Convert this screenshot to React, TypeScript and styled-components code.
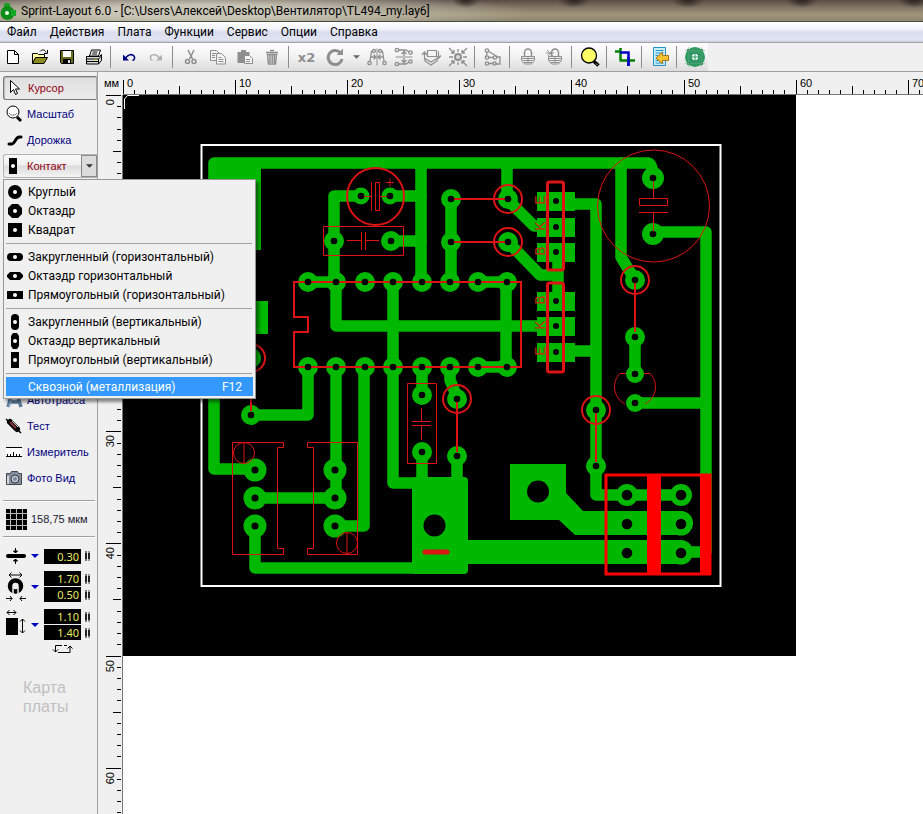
import React, { useEffect, useState } from "react";
import styled, { createGlobalStyle, css } from "styled-components";

const uiFont = `Roboto, "Noto Sans", sans-serif`;
const plainFont = `"Liberation Sans", Arial, sans-serif`;

const GlobalStyle = createGlobalStyle`
  * { box-sizing: border-box; }
  html, body, #root { height: 100%; }
  body { margin: 0; overflow: hidden; background: #fff; }
  button, input { font: inherit; color: inherit; margin: 0; padding: 0; border: 0; background: none; border-radius: 0; }
  svg { display: block; flex: none; }
`;

const Window = styled.div`
  display: flex;
  flex-direction: column;
  height: 100vh;
  font-family: ${uiFont};
  font-size: 12px;
  color: #000;
`;

const TitleBar = styled.header`
  display: flex;
  align-items: center;
  gap: 4px;
  height: 22px;
  flex: none;
  border-bottom: 1px solid #4a4640;
  background:
    radial-gradient(ellipse 14px 8px at 466px 0, #2b231e, transparent),
    radial-gradient(ellipse 16px 8px at 574px 0, #2b231e, transparent),
    radial-gradient(ellipse 16px 8px at 688px 0, #2b231e, transparent),
    radial-gradient(ellipse 16px 8px at 802px 0, #2b231e, transparent),
    radial-gradient(ellipse 16px 8px at 914px 0, #2b231e, transparent),
    radial-gradient(ellipse 330px 22px at 200px 12px, #c8c5b6 30%, transparent),
    linear-gradient(#5a4c46, #867b68 40%, #a09679 70%, #8d8573);
`;

const Title = styled.h1`
  margin: 0;
  font-size: 12px;
  font-weight: 400;
  line-height: 20px;
  white-space: nowrap;
`;

const MenuBar = styled.nav`
  display: flex;
  align-items: center;
  gap: 13px;
  height: 21px;
  flex: none;
  padding: 0 7px;
  border-bottom: 1px solid #a5a5a9;
  background: linear-gradient(#fff, #f1f3fb 35%, #dadeee 50%, #dfe3f2 90%, #c6c9d6);
`;

const MenuBarItem = styled.button`
  line-height: 18px;
  white-space: nowrap;
`;

const ToolbarStrip = styled.div`
  display: flex;
  height: 29px;
  flex: none;
  background: #f0f0f0;
  border-bottom: 1px solid #a0a0a0;
`;

const Toolbar = styled.div`
  display: flex;
  align-items: center;
  background: linear-gradient(#fdfdfd, #f2f2f2 50%, #dcdcdc);
`;

const ToolButton = styled.button<{ $w?: number }>`
  display: flex;
  align-items: center;
  justify-content: center;
  width: ${(p) => p.$w ?? 27}px;
  height: 28px;
`;

const ToolSeparator = styled.span`
  width: 1px;
  height: 22px;
  margin: 0 4px 0 3px;
  background: #8c8c8c;
`;

const Workspace = styled.main`
  display: flex;
  flex: 1;
  min-height: 0;
`;

const Sidebar = styled.aside`
  display: flex;
  flex-direction: column;
  flex: none;
  width: 98px;
  padding: 4px 0 0 3px;
  border-right: 1px solid #a0a0a0;
  background: #f0f0f0;
  font-family: ${plainFont};
  font-size: 11px;
`;

const ToolRow = styled.button<{ $active?: boolean; $state?: "pressed" }>`
  display: flex;
  align-items: center;
  gap: 4px;
  width: 100%;
  height: 26px;
  flex: none;
  text-align: left;
  white-space: nowrap;
  color: ${(p) => (p.$active ? "#900010" : "#000080")};
  ${(p) =>
    p.$state === "pressed" &&
    css`
      height: 24px;
      margin: 0 0 1px;
      border: 1px solid #777;
      border-right-color: #aaa;
      border-radius: 3px 0 0 3px;
      background: linear-gradient(#dedede, #ececec);
      box-shadow: inset 1px 1px 1px #bbb;
    `}
`;

const SplitTool = styled.div`
  position: relative;
  display: flex;
  flex: none;
  height: 24px;
  margin: 1px 0 209px;
  border: 1px solid #b4b4b4;
  border-right: 0;
  border-radius: 3px 0 0 3px;
  background: linear-gradient(#fafafa, #f0f0f0 45%, #dcdcdc 50%, #f4f4f4);
`;

const SplitMain = styled.button`
  display: flex;
  align-items: center;
  gap: 4px;
  flex: 1;
  color: #900010;
`;

const SplitArrow = styled.button`
  display: flex;
  align-items: center;
  justify-content: center;
  width: 16px;
  border: 1px solid #8a8a8a;
  background: #dcdcdc;
`;

const Popup = styled.div`
  position: absolute;
  z-index: 2;
  top: 24px;
  left: -1px;
  width: 253px;
  padding: 2px;
  border: 1px solid #979797;
  background: #f0f0f0;
  box-shadow: 3px 3px 3px rgba(0, 0, 0, 0.45);
  font-family: ${uiFont};
  font-size: 12px;
  color: #000;
`;

const PopupItem = styled.button<{ $hot?: boolean }>`
  display: flex;
  align-items: center;
  gap: 3px;
  width: 100%;
  height: 19px;
  line-height: 19px;
  padding: 1px 11px 0 0;
  white-space: nowrap;
  background: ${(p) => (p.$hot ? "#3399ff" : "transparent")};
  color: ${(p) => (p.$hot ? "#fff" : "#000")};
`;

const Shortcut = styled.span`
  margin-left: auto;
`;

const PopupRule = styled.hr`
  height: 1px;
  margin: 4px 1px 3px 0;
  border: 0;
  background: #a0a0a0;
`;

const SideRule = styled.hr<{ $top?: number }>`
  width: 92px;
  height: 2px;
  flex: none;
  margin: ${(p) => p.$top ?? 0}px 0 0;
  border: 0;
  border-top: 1px solid #a0a0a0;
  background: #fff;
`;

const GridButton = styled.button`
  display: flex;
  align-items: center;
  gap: 4px;
  height: 34px;
  flex: none;
  padding-left: 3px;
  white-space: nowrap;
  color: #202030;
`;

const Params = styled.div`
  display: flex;
  flex-direction: column;
  gap: 7px;
  padding-top: 10px;
`;

const ParamGroup = styled.div`
  display: flex;
  align-items: center;
  padding-left: 3px;
`;

const ParamIcon = styled.div`
  width: 25px;
`;

const ParamDrop = styled.button`
  display: flex;
  width: 13px;
  justify-content: flex-start;
`;

const ParamFields = styled.div`
  display: flex;
  flex-direction: column;
  gap: 1px;
`;

const ParamField = styled.label`
  display: flex;
  align-items: center;
  gap: 3px;
`;

const ParamInput = styled.input`
  width: 37px;
  height: 15px;
  padding-right: 2px;
  background: #000;
  color: #e8e860;
  font-family: "Noto Sans", sans-serif;
  font-size: 11px;
  line-height: 15px;
  text-align: right;
`;

const SwapButton = styled.button`
  align-self: flex-start;
  margin: 4px 0 0 49px;
`;

const BoardMap = styled.p`
  margin: 24px 0 0 20px;
  font-size: 16px;
  line-height: 19px;
  color: #c0c0c0;
`;

const Sheet = styled.section`
  display: grid;
  grid-template-columns: 25px 1fr;
  grid-template-rows: 23px 1fr;
  flex: 1;
  min-width: 0;
  min-height: 0;
  background: #f0f0f0;
`;

const Unit = styled.span`
  padding-left: 6px;
  font-family: ${plainFont};
  font-size: 11px;
  line-height: 23px;
`;

const RulerTop = styled.div`
  overflow: hidden;
  border-bottom: 1px solid #777;
`;

const RulerLeft = styled.div`
  overflow: hidden;
  border-right: 1px solid #777;
`;

const Canvas = styled.div`
  overflow: hidden;
  background: #fff;
`;

/* ---------- toolbar icons ---------- */

type Draw = { children: React.ReactNode; s?: number };
const Ic = ({ children, s = 20 }: Draw) => (
  <svg width={s} height={s} viewBox={`0 0 ${s} ${s}`} fill="none" aria-hidden="true">
    {children}
  </svg>
);
const G = "#8e8e8e";

const icons: Record<string, React.ReactNode> = {
  new: <path d="M4.500 3.500h7l4 4v9h-11z M11.500 3.500v4h4" fill="#fff" stroke="#000" />,
  open: (
    <>
      <path d="M2.500 16.500V6.500h5l1 1h6v3" fill="#ffff9c" stroke="#000" />
      <path d="M2.500 16.500l3-6h12l-3.500 6z" fill="#8c8c1c" stroke="#000" />
      <path d="M10 4.500c2-2.500 5-2 6 1M17.500 3v3.500H14" stroke="#000" />
    </>
  ),
  save: (
    <>
      <path d="M3.500 3.500h13v13h-12l-1-1z" fill="#6c6c20" stroke="#000" />
      <path d="M6 4h8v6H6z" fill="#fff" />
      <path d="M6 12h8v4.500H6z" fill="#000" />
      <path d="M11 13h2v3h-2z" fill="#ddd" />
    </>
  ),
  print: (
    <>
      <path d="M5.500 9l2-6h9l-2 6z" fill="#fff" stroke="#000" />
      <path d="M8.500 5h5M8 7h5" stroke="#000" />
      <path d="M2.500 9.500h13l2-2v6l-3 3.500h-12z" fill="#ddd" stroke="#000" />
      <path d="M2.500 12h12M3 14.500h11M14.500 17v-5l3-3" stroke="#000" />
      <path d="M10 13h3" stroke="#d8d020" />
    </>
  ),
  undo: (
    <>
      <path d="M6 11.500c3-4 7-5 9-2.500 1.500 2 0 4-1.500 4.500" stroke="#000080" strokeWidth="1.500" />
      <path d="M4 7.500v6h6z" fill="#000080" />
    </>
  ),
  redo: (
    <>
      <path d="M14 11.500c-3-4-7-5-9-2.500-1.500 2 0 4 1.500 4.500" stroke="#a8a8a8" strokeWidth="1.300" />
      <path d="M16 7.500v6h-6z" fill="#b0b0b0" />
    </>
  ),
  cut: (
    <g stroke={G} strokeWidth="1.500">
      <path d="M7 3l4.500 9M13 3L8.500 12" />
      <circle cx="6.500" cy="14.500" r="2" />
      <circle cx="13" cy="14.500" r="2" />
    </g>
  ),
  copy: (
    <g stroke={G} fill="#f4f4f4">
      <path d="M2.500 3.500h6l3 3v7h-9z" />
      <path d="M8.500 6.500h5l4 4v6.500h-9z" />
      <path d="M4 6.500h4M4 8.500h3M4 10.500h3M10.500 10.500h3M10.500 12.500h5M10.500 14.500h5" />
    </g>
  ),
  paste: (
    <>
      <path d="M2.500 5h12v11h-12zM6 3h5v3H6z" fill={G} />
      <path d="M9.500 8.500h5l3 3v5h-8z" fill="#f4f4f4" stroke={G} />
      <path d="M11 12.500h4M11 14.500h4" stroke={G} />
    </>
  ),
  trash: (
    <g stroke={G} strokeWidth="1.500">
      <path d="M4 5.500h12M8 3.500h4M5.500 7.500l1 9.500h7l1-9.500zM8 8v8M10.200 8v8M12.300 8v8" />
    </g>
  ),
  rotate: (
    <>
      <path d="M15.500 6A7 7 0 1 0 17 12" stroke={G} strokeWidth="3" />
      <path d="M11.500 8H18V1.500z" fill={G} />
    </>
  ),
  mirrorH: (
    <g stroke={G} strokeWidth="1.300">
      <path d="M10 1.500v17" strokeWidth="1" />
      <path d="M6 4.500H4.500L3 14M14 4.500h1.500L17 14M4 10h4.500M16 10h-4.500M6.500 7.500L9 10l-2.500 2.500M13.500 7.500L11 10l2.500 2.500" />
      <circle cx="7" cy="4" r="1.500" /><circle cx="13" cy="4" r="1.500" />
      <circle cx="2.500" cy="16" r="1.700" /><circle cx="17.500" cy="16" r="1.700" />
    </g>
  ),
  mirrorV: (
    <g stroke={G} strokeWidth="1.300">
      <path d="M1.500 10h17" strokeWidth="1" />
      <path d="M4 3h8l3 2M4 17h8l3-2M10 4.500V9M10 11v4.500M7.500 7L10 4.500 12.500 7M7.500 13l2.500 2.500 2.500-2.500" />
      <circle cx="3" cy="3" r="1.700" /><circle cx="16.500" cy="5.500" r="1.700" />
      <circle cx="3" cy="17" r="1.700" /><circle cx="16.500" cy="14.500" r="1.700" />
    </g>
  ),
  flip: (
    <g stroke={G} strokeWidth="1.200">
      <path d="M6.500 3.500h9v6h-9zM3.500 12V5.500M1 8l2.500-3L6 8M17.500 4.500V11M15 8.500l2.500 3L20 8.500M4 11.500l6 3.500 6-3.500M4 11.500V14l6 4 6-4v-2.500" />
    </g>
  ),
  snap: (
    <g stroke={G} strokeWidth="1.300">
      <circle cx="10" cy="10" r="3" fill="#ddd" strokeWidth="2" />
      <path d="M1 1l5 5M6 3v3H3M19 1l-5 5M14 3v3h3M1 19l5-5M3 14h3v3M19 19l-5-5M17 14h-3v3M10 2v3M10 15v3M1 10h4M15 10h4" />
    </g>
  ),
  connect: (
    <g stroke={G} strokeWidth="1.300">
      <path d="M5 4l10 6h2v7h-5M5.500 10.500h5M5.500 16.500h5M4 5.500l-.500 4" />
      <circle cx="4" cy="3.500" r="1.700" /><circle cx="4" cy="10.500" r="1.700" />
      <circle cx="12" cy="10.500" r="1.700" /><circle cx="4" cy="16.500" r="1.700" />
      <circle cx="11.500" cy="16.500" r="1.700" />
    </g>
  ),
  lock: (
    <g stroke={G}>
      <path d="M6.500 9V5.500a3.500 3.500 0 0 1 7 0V9" strokeWidth="1.500" />
      <path d="M3.500 9.500h13v4l-3 3.500h-7l-3-3.500z" fill="#eee" />
      <path d="M4 11.500h12M4.500 13.500h11M6 15.500h8M10 10v6" />
    </g>
  ),
  lock2: (
    <g stroke={G}>
      <path d="M6.500 9V5.500a3.500 3.500 0 0 1 7 0V9" strokeWidth="1.500" />
      <path d="M3.500 9.500h13v4l-3 3.500h-7l-3-3.500z" fill="#eee" />
      <path d="M4 11.500h12M4.500 13.500h11M6 15.500h8M10 10v6M2 3l6 6M8 3L3 9M1 6h8" />
    </g>
  ),
  zoom: (
    <>
      <path d="M14 14.500l4.500 4" stroke="#000" strokeWidth="3.500" />
      <circle cx="9" cy="8.500" r="7.500" fill="#ffff66" stroke="#000" strokeWidth="1.300" />
      <path d="M16 16.500l1.500 1.500" stroke="#aaa" />
    </>
  ),
  crop: (
    <>
      <path d="M0 4.500h5M5.500 1v12" stroke="#008000" strokeWidth="2.500" />
      <path d="M5 5.500h8.500V19" stroke="#0000c8" strokeWidth="2.500" />
      <path d="M4.500 13.500H20" stroke="#008000" strokeWidth="2.500" />
      <path d="M13.500 10v9" stroke="#0000c8" strokeWidth="2.500" />
    </>
  ),
  import: (
    <>
      <path d="M3.500 0.500h12v18h-12z" fill="#c8f0ff" stroke="#2890c8" />
      <path d="M5.500 3.500h8M5.500 6h8M5.500 8.500h3M5.500 11h2M5.500 13.500h4M5.500 16h8" stroke="#2890c8" />
      <path d="M6 11l6.500-6v3.500h6v5h-6V17z" fill="#f8c030" stroke="#a07818" />
    </>
  ),
  chip: (
    <>
      <circle cx="10" cy="10" r="10" fill="#2f9a62" />
      <path d="M2 2h4v4H2zM14 2h4v4h-4zM2 14h4v4H2zM14 14h4v4h-4z" fill="#2f9a62" />
      <path d="M3.500 0v20M16.500 0v20M0 3.500h20M0 16.500h20" stroke="#6f9f84" strokeWidth="0.500" />
      <path d="M8 7h4v1h1v4h-1v1H8v-1H7V8h1z" fill="#fff" />
      <path d="M10 7v6M7 10h6" stroke="#2f9a62" />
    </>
  ),
};

const ToolX2 = styled.span`
  font-family: "DejaVu Sans", sans-serif;
  font-size: 13px;
  font-weight: 700;
  color: #8e8e8e;
`;

const tools: [string, string][][] = [
  [["new", "Новый"], ["open", "Открыть"], ["save", "Сохранить"], ["print", "Печать"]],
  [["undo", "Отменить"], ["redo", "Повторить"]],
  [["cut", "Вырезать"], ["copy", "Копировать"], ["paste", "Вставить"], ["trash", "Удалить"]],
  [["x2", "Дублировать"], ["rotate", "Повернуть"], ["caret", "Угол"], ["mirrorH", "Отразить по горизонтали"], ["mirrorV", "Отразить по вертикали"], ["flip", "На другую сторону"], ["snap", "Привязать к сетке"]],
  [["connect", "Соединения"]],
  [["lock", "Группировать"], ["lock2", "Разгруппировать"]],
  [["zoom", "Масштаб"]],
  [["crop", "Обрезка"]],
  [["import", "Шаблон"]],
  [["chip", "Металлизация"]],
];

const Caret = ({ color = "#333", w = 7 }: { color?: string; w?: number }) => (
  <svg width={w} height="4" viewBox="0 0 8 4" aria-hidden="true">
    <path d="M0 0h8L4 4z" fill={color} />
  </svg>
);

const toolContent = (id: string) => {
  if (id === "x2") return <ToolX2>x2</ToolX2>;
  if (id === "caret") return <Caret color="#666" />;
  return <Ic>{icons[id]}</Ic>;
};
const widths: Record<string, number> = { new: 26, caret: 13, rotate: 30 };
const toolWidth = (id: string) => widths[id] ?? 27;

/* ---------- side icons ---------- */

const side = {
  cursor: <path d="M6.500 2.500v12l3-3 2 5 2-1-2-4.500h4z" fill="#fff" stroke="#000" />,
  magnify: (
    <>
      <circle cx="10" cy="8" r="6" fill="#fff" stroke="#000" />
      <path d="M6 9c2 3 6 3 8 0" stroke="#777" />
      <path d="M14 13l4 4" stroke="#000" strokeWidth="3" />
    </>
  ),
  track: <path d="M6 14h2.500c4 0 3.500-7 8-7H18" stroke="#000" strokeWidth="3" strokeLinecap="round" />,
  auto: (
    <>
      <path d="M5 17L9 4h5l4 13M7 12h9" stroke="#5c7c9c" strokeWidth="3.500" />
      <path d="M6 17L10 4" stroke="#a8c4dc" />
    </>
  ),
  test: (
    <>
      <path d="M3 3l15 14" stroke="#000" strokeWidth="1.500" />
      <path d="M7 6l7 7" stroke="#000" strokeWidth="6" strokeLinecap="round" />
      <path d="M7 6l6 6" stroke="#8a3030" strokeWidth="2" />
      <path d="M9 5l6 6" stroke="#ccc" />
    </>
  ),
  measure: (
    <>
      <path d="M3 5h16v9H3z" fill="#fff" />
      <path d="M3 5.500h16M3 14.500h16M4.500 12v2M7.500 12v2M10.500 10v4M13.500 12v2M16.500 12v2" stroke="#000" />
    </>
  ),
  photo: (
    <>
      <path d="M3.500 5.500h4l1-2h6l1 2h3v11h-15z" fill="#8890a0" stroke="#404850" />
      <path d="M4 8h2v8H4z" fill="#d8d8dc" />
      <circle cx="12" cy="11" r="4" fill="#c8ccd4" stroke="#303840" />
      <circle cx="12" cy="11" r="2" fill="#7888a0" />
    </>
  ),
};

const padIcon = (kind: string) => {
  const shapes: Record<string, React.ReactNode> = {
    round: <circle cx="12" cy="9" r="7" />,
    octa: <path d="M9 2h6l4 4v6l-4 4H9l-4-4V6z" />,
    square: <path d="M5 2h14v14H5z" />,
    roundH: <rect x="4" y="5" width="16" height="8" rx="4" />,
    octaH: <path d="M7 5h10l3 3v2l-3 3H7l-3-3V8z" />,
    rectH: <path d="M4 5h16v8H4z" />,
    roundV: <rect x="8" y="1" width="8" height="16" rx="4" />,
    octaV: <path d="M10 1h4l2 3v10l-2 3h-4l-2-3V4z" />,
    rectV: <path d="M8 1h8v16H8z" />,
    none: null,
  };
  return (
    <svg width="19" height="18" viewBox="3 0 19 18" aria-hidden="true">
      {shapes[kind]}
      {kind !== "none" && <circle cx="12" cy="9" r="2" fill="#fff" />}
    </svg>
  );
};

const popupGroups: [string, string][][] = [
  [["round", "Круглый"], ["octa", "Октаэдр"], ["square", "Квадрат"]],
  [["roundH", "Закругленный (горизонтальный)"], ["octaH", "Октаэдр горизонтальный"], ["rectH", "Прямоугольный (горизонтальный)"]],
  [["roundV", "Закругленный (вертикальный)"], ["octaV", "Октаэдр вертикальный"], ["rectV", "Прямоугольный (вертикальный)"]],
];

const Spin = () => (
  <svg width="8" height="12" viewBox="0 0 8 12" aria-hidden="true">
    <rect x="1" y="1" width="2" height="10" fill="#777" />
    <rect x="4" y="1" width="2" height="10" fill="#999" />
    <path d="M1 3h2v6H1zM4 3h2v6H4z" fill="#222" />
  </svg>
);

const paramGroups = [
  {
    name: "Ширина дорожки",
    values: ["0.30"],
    icon: (
      <svg width="20" height="16" viewBox="0 0 20 16" stroke="#000" aria-hidden="true">
        <path d="M2 8h16" strokeWidth="4" strokeLinecap="round" />
        <path d="M9.500 0v5M9.500 11v5" />
        <path d="M7.500 3h4l-2 2zM7.500 13h4l-2-2z" />
      </svg>
    ),
  },
  {
    name: "Контакт",
    values: ["1.70", "0.50"],
    icon: (
      <svg width="22" height="31" viewBox="0 0 22 31" fill="none" stroke="#000" aria-hidden="true">
        <path d="M3 4h13M5.500 1.500L3 4l2.500 2.500M13.500 1.500L16 4l-2.500 2.500" />
        <circle cx="9.500" cy="15" r="5.500" strokeWidth="4.500" />
        <path d="M7 16v8M12 16v8" stroke="#f0f0f0" strokeWidth="1.500" />
        <path d="M0 27.500h6M4 25l2 2.500L4 30M20 27.500h-6M16 25l-2 2.500 2 2.500" />
      </svg>
    ),
  },
  {
    name: "Планар",
    values: ["1.10", "1.40"],
    icon: (
      <svg width="22" height="31" viewBox="0 0 22 31" fill="none" stroke="#000" aria-hidden="true">
        <path d="M1 3.500h9M3.500 1L1 3.500 3.500 6M7.500 1L10 3.500 7.500 6M16.500 10v14M14 12.500l2.500-2.500 2.500 2.500M14 21.500l2.500 2.500 2.500-2.500" />
        <path d="M0 9h12v17H0z" fill="#000" stroke="none" />
      </svg>
    ),
  },
];

/* ---------- rulers ---------- */

const STEP = 11.21;
const tickLen = (i: number) => (i % 10 === 0 ? 14 : i % 5 === 0 ? 8 : 4);
const range = (length: number) => Array.from({ length: Math.max(1, Math.ceil(length)) }, (_, i) => i);

const useWindowSize = () => {
  const read = () => ({ w: window.innerWidth, h: window.innerHeight });
  const [size, setSize] = useState(read);
  useEffect(() => {
    const update = () => setSize(read());
    window.addEventListener("resize", update);
    return () => window.removeEventListener("resize", update);
  }, []);
  return size;
};

const HorizontalRuler = ({ length }: { length: number }) => (
  <svg width="100%" height="22" fontFamily="Liberation Sans" fontSize="11" aria-hidden="true">
    {range(length / STEP).map((i) => (
      <path key={i} d={`M${Math.round(i * STEP) + 0.5} 22v-${tickLen(i)}`} stroke="#000" />
    ))}
    {range(length / STEP / 10).map((i) => (
      <text key={i} x={Math.round(i * 10 * STEP) + 4} y="15">{i * 10}</text>
    ))}
  </svg>
);

const VerticalRuler = ({ length }: { length: number }) => (
  <svg width="24" height="100%" fontFamily="Liberation Sans" fontSize="11" aria-hidden="true">
    {range(length / STEP).map((i) => (
      <path key={i} d={`M23 ${Math.round(i * STEP) + 0.5}h-${i % 10 === 0 ? 15 : tickLen(i)}`} stroke="#000" />
    ))}
    {range(length / STEP / 10).map((i) => (
      <text key={i} textAnchor="end" transform={`translate(16 ${Math.round(i * 10 * STEP) + 4}) rotate(-90)`}>
        {i * 10}
      </text>
    ))}
  </svg>
);

/* ---------- circuit board ---------- */

type Pad = [number, number, number, number];
const icX = [308, 336, 365, 393, 422, 450, 478, 507];
const pads: Pad[] = [
  ...icX.map((x): Pad => [x, 282, 10, 3.3]),
  ...icX.map((x): Pad => [x, 367, 10, 3.3]),
  [361, 196, 8.5, 3.3], [390, 196, 8.5, 3.3], [334, 241, 10, 3.3], [391, 241, 10, 3.3],
  [451, 199, 10, 3.3], [451, 242, 10, 3.3], [508, 199, 10, 3.3], [508, 242, 10, 3.3],
  [653, 178, 11, 3.3], [653, 234, 11, 3.3], [635, 280, 10, 3.3], [635, 337, 10, 3.3],
  [635, 374, 9, 3.3], [635, 403, 9, 3.3], [596, 410, 10, 3.3], [596, 466, 10, 3.3],
  [251, 358, 10, 3.3], [251, 415, 10, 3.3],
  [255, 470, 11.5, 3.5], [255, 498, 11.5, 3.5], [255, 526, 11.5, 3.5],
  [335, 470, 11.5, 3.5], [335, 498, 11.5, 3.5], [335, 526, 11.5, 3.5],
  [422, 395, 10, 3.3], [422, 452, 10, 3.3], [457, 399, 10, 3.3], [457, 456, 10, 3.3],
  [627, 495, 11, 5.3], [681, 495, 11, 5.3], [627, 524, 11, 5.3], [681, 524, 11.5, 5.3],
  [627, 553, 11, 5.3], [681, 553, 11.5, 5.3],
];
const terminals = [201, 227, 252, 301, 326, 352];
const ringed: [number, number][] = [[508, 199], [508, 242], [635, 280], [457, 399], [596, 410], [251, 358]];

const Board = () => (
  <svg width="673" height="561" viewBox="123 95 673 561" fill="none" role="img" aria-label="Печатная плата">
    <rect x="123" y="95" width="673" height="561" fill="#000" />
    <path d="M124.500 109V99l3-3.500H139" stroke="#fff" />
    <rect x="201.500" y="145" width="519" height="441" stroke="#fff" strokeWidth="2" />
    <g stroke="#00b800" strokeWidth="11.500" strokeLinecap="round" strokeLinejoin="round">
      <path d="M214 163H648Q653 164 653 178M214 163V469H255M421 163V282M507 163V199L534 226H545M508 242L540 275H558V252M558 275V301" />
      <path d="M621 163V257L635 280M653 234V232H706V552H681M635 403H706M635 337V374M555 204H596V495H681M560 351H596M596 466V495" />
      <path d="M451 199V282M478 282H506V367H478M308 282H336V326H550M393 282V367M334 241V282M334 241V196H361M390 196H421M391 241H421" />
      <path d="M308 367V415H251M336 367V498H255M364 367V526H335M255 526V568H462M393 367V483H420M422 367V395M422 452V490M450 367V380L457 397M457 456V490" />
    </g>
    <g fill="#00b800">
      <path d="M210 163h51v87h-51zM210 301h58v33h-58z" />
      <rect x="412" y="477" width="56" height="97" rx="4" />
      <path d="M510 464h56v29l17 18h98v24H575l-16-15h-49z" />
      <path d="M460 540H681v24H460z" />
      <circle cx="681" cy="523" r="12" /><circle cx="681" cy="552" r="12" />
      {terminals.map((y) => <path key={y} d={`M537 ${y - 9}h38v19h-38z`} />)}
      {pads.map(([x, y, r], i) => <circle key={i} cx={x} cy={y} r={r} />)}
    </g>
    <g stroke="#dc1414">
      <g strokeWidth="2">
        <circle cx="375.500" cy="196.500" r="28.500" />
        <path d="M308 282H294V317H308V332H294V367H521V282H308" />
        <path d="M451 199H508M451 242H508M635 280V332M457 399V452M596 410V462M251 358V411" />
        {ringed.map(([x, y]) => <circle key={`${x}-${y}`} cx={x} cy={y} r="14" />)}
      </g>
      <g strokeWidth="3">
        <rect x="547.500" y="182" width="16" height="88" rx="2" />
        <rect x="547.500" y="283" width="16" height="89" rx="2" />
        <rect x="606" y="475" width="104" height="99" stroke="#f00" />
      </g>
      <path d="M647 474h14v101h-14zM700 474h11v101h-11z" fill="#f00" stroke="none" />
      <path d="M425 552H447" strokeWidth="5" strokeLinecap="round" />
      <path d="M371.500 182V211M375.500 182.500h4v28h-4zM361 196.500H371M380 196.500H390M386 182.500h8M390 178.500v8" />
      <path d="M323.500 226.500h80v29h-80zM347 240.500H361M366 240.500H379M361.500 232v18M365.500 232v18" />
      <circle cx="653.500" cy="206" r="56" />
      <path d="M639.500 198.500h28v7h-28zM639 212.500h29M653.500 178V198M653.500 213V234" />
      <path d="M626 373.500H620C612 381 612 397 625 404M644 373.500H650C658 381 658 397 645 404" />
      <path d="M407.500 383.500h29v80h-29zM412 421.500h19M412 425.500h19M421.500 408v13M421.500 426v14" />
      <path d="M232.500 442.500H283.500V447.500H277.500V548.500H283.500V554.500H232.500zM357.500 442.500H307.500V447.500H313.500V548.500H307.500V554.500H357.500z" />
      <circle cx="244" cy="453" r="10.500" /><circle cx="347" cy="543" r="10.500" />
      <path d="M244 443v20M347 533v20" />
    </g>
    <g fill="#000">
      {pads.map(([x, y, , h], i) => <circle key={i} cx={x} cy={y} r={h} />)}
      {terminals.map((y) => <circle key={y} cx="556" cy={y} r="3" />)}
      <circle cx="434.500" cy="525.500" r="11" /><circle cx="538" cy="491.500" r="11" />
    </g>
    <g fill="#c82810" fontFamily="Liberation Sans" fontSize="14" textAnchor="middle">
      {["E", "K", "B", "B", "K", "E"].map((c, i) => (
        <text key={i} transform={`translate(545 ${terminals[i] - 1}) rotate(-90)`}>{c}</text>
      ))}
    </g>
  </svg>
);

export default function App() {
  const { w, h } = useWindowSize();
  return (
    <>
      <GlobalStyle />
      <Window>
        <TitleBar>
          <svg width="17" height="18" viewBox="0 0 17 18" aria-hidden="true">
            <rect x="4" y="1" width="6" height="6" rx="2" fill="#18a020" />
            <circle cx="7.500" cy="11" r="7" fill="#0c8c18" />
            <path d="M11 8h5v6h-5z" fill="#18a828" />
            <circle cx="7" cy="11" r="2" fill="#e8ffe8" />
          </svg>
          <Title>Sprint-Layout 6.0 - [C:\Users\Алексей\Desktop\Вентилятор\TL494_my.lay6]</Title>
        </TitleBar>
        <MenuBar>
          {["Файл", "Действия", "Плата", "Функции", "Сервис", "Опции", "Справка"].map((t) => (
            <MenuBarItem key={t}>{t}</MenuBarItem>
          ))}
        </MenuBar>
        <ToolbarStrip>
          <Toolbar>
            {tools.map((group, gi) => (
              <React.Fragment key={gi}>
                {gi > 0 && <ToolSeparator />}
                {group.map(([id, label]) => (
                  <ToolButton key={id} $w={toolWidth(id)} aria-label={label}>
                    {toolContent(id)}
                  </ToolButton>
                ))}
              </React.Fragment>
            ))}
          </Toolbar>
        </ToolbarStrip>
        <Workspace>
          <Sidebar>
            <ToolRow $active $state="pressed"><Ic>{side.cursor}</Ic>Курсор</ToolRow>
            <ToolRow><Ic>{side.magnify}</Ic>Масштаб</ToolRow>
            <ToolRow><Ic>{side.track}</Ic>Дорожка</ToolRow>
            <SplitTool>
              <SplitMain>{padIcon("rectV")}Контакт</SplitMain>
              <SplitArrow aria-label="Форма контакта"><Caret /></SplitArrow>
              <Popup role="menu">
                {popupGroups.map((group, i) => (
                  <React.Fragment key={i}>
                    {group.map(([kind, label]) => (
                      <PopupItem key={kind} role="menuitem">{padIcon(kind)}{label}</PopupItem>
                    ))}
                    <PopupRule />
                  </React.Fragment>
                ))}
                <PopupItem $hot role="menuitem">
                  {padIcon("none")}Сквозной (металлизация)<Shortcut>F12</Shortcut>
                </PopupItem>
              </Popup>
            </SplitTool>
            <ToolRow><Ic>{side.auto}</Ic>Автотрасса</ToolRow>
            <ToolRow><Ic>{side.test}</Ic>Тест</ToolRow>
            <ToolRow><Ic>{side.measure}</Ic>Измеритель</ToolRow>
            <ToolRow><Ic>{side.photo}</Ic>Фото Вид</ToolRow>
            <SideRule $top={9} />
            <GridButton>
              <svg width="21" height="21" viewBox="0 0 21 21" aria-hidden="true">
                <path d="M0 0h21v21H0z" />
                <path d="M4.500 0v21M10.500 0v21M16.500 0v21M0 4.500h21M0 10.500h21M0 16.500h21" stroke="#bbb" />
              </svg>
              158,75 мкм
            </GridButton>
            <SideRule />
            <Params>
              {paramGroups.map((g) => (
                <ParamGroup key={g.name}>
                  <ParamIcon>{g.icon}</ParamIcon>
                  <ParamDrop aria-label={g.name}><Caret color="#0000c0" w={8} /></ParamDrop>
                  <ParamFields>
                    {g.values.map((v) => (
                      <ParamField key={v}>
                        <ParamInput defaultValue={v} aria-label={`${g.name} ${v}`} />
                        <Spin />
                      </ParamField>
                    ))}
                  </ParamFields>
                </ParamGroup>
              ))}
            </Params>
            <SwapButton aria-label="Поменять местами">
              <svg width="21" height="10" viewBox="0 0 21 10" fill="none" stroke="#000" aria-hidden="true">
                <path d="M10 1.500H3.500V8M1 5.500l2.500 2.500L6 5.500M6 8.500h12V2M12 1.500h3M15.500 4.500L18 2l2.500 2.500" />
              </svg>
            </SwapButton>
            <BoardMap>Карта<br />платы</BoardMap>
          </Sidebar>
          <Sheet>
            <Unit>мм</Unit>
            <RulerTop><HorizontalRuler length={w - 123} /></RulerTop>
            <RulerLeft><VerticalRuler length={h - 95} /></RulerLeft>
            <Canvas><Board /></Canvas>
          </Sheet>
        </Workspace>
      </Window>
    </>
  );
}
